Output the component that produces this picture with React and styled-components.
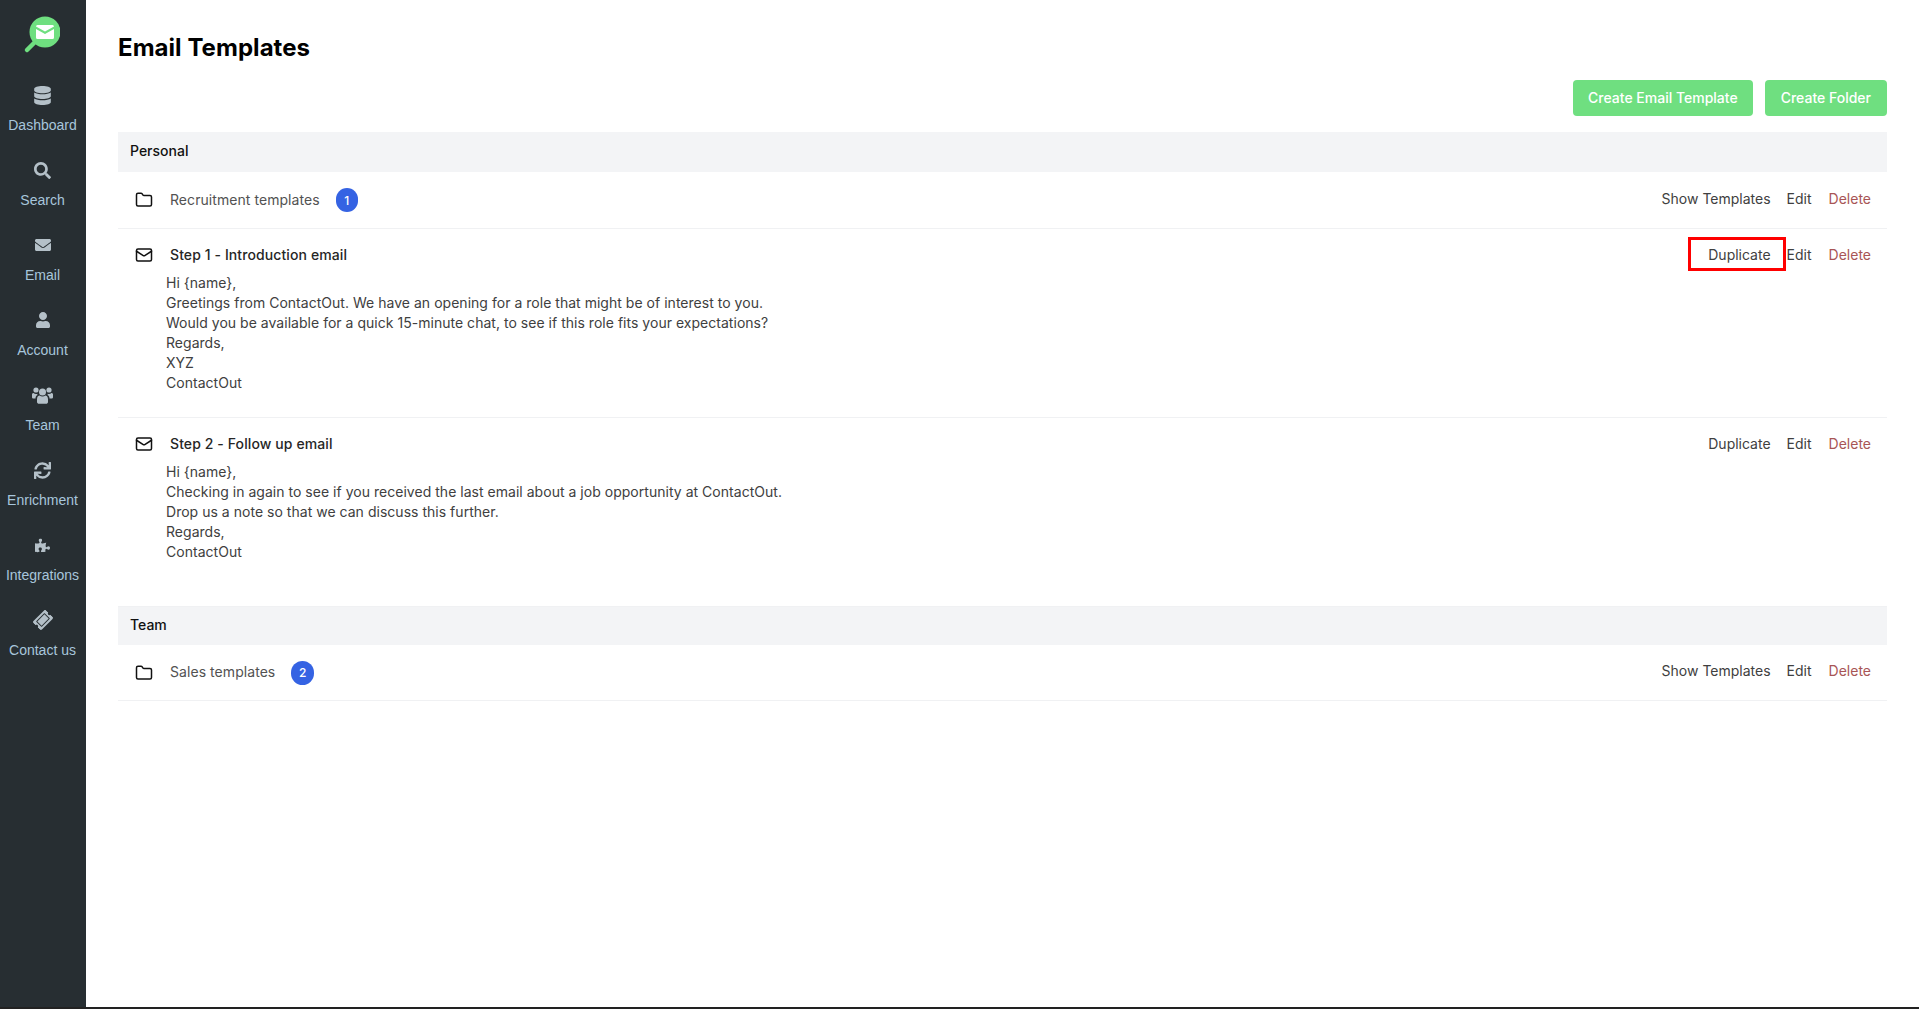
import React from "react";
import styled, { createGlobalStyle } from "styled-components";
import { FaDatabase, FaSearch, FaEnvelope, FaUser, FaSync, FaPuzzlePiece, FaTicketAlt } from "react-icons/fa";
import { Folder, Mail } from "lucide-react";

const Global = createGlobalStyle`
  html, body { margin: 0; padding: 0; height: 100%; background: #fff; }
  #root { height: 1009px; overflow: hidden; }
  * { box-sizing: border-box; }
`;
const Page = styled.div`
  display: flex; flex-direction: column; height: 1009px;
  font-family: Inter, "Liberation Sans", sans-serif; font-size: 14px; color: #404040;
`;
const Body = styled.div` display: flex; flex: 1; min-height: 0; `;
const BottomEdge = styled.div` height: 2px; background: #222; `;
const Sidebar = styled.nav`
  width: 86px; flex: none; background: #272e32; display: flex; flex-direction: column; align-items: center;
  padding-top: 16px; font-family: "Liberation Sans", Arial, sans-serif;
`;
const Logo = styled.svg` width: 38px; height: 38px; display: block; margin-bottom: 21px; margin-right: 4px; `;
const NavItem = styled.a`
  height: 75px; width: 86px; display: flex; flex-direction: column; align-items: center;
  color: #a7c6dc; font-size: 14px; line-height: 20px; padding: 10px 1px 0 0;
`;
const NavIcon = styled.span`
  height: 20px; margin-bottom: 10px; display: flex; align-items: center; justify-content: center;
  color: #b4c0c8; font-size: ${(p) => p.$size}px;
  svg { display: block; transform: rotate(${(p) => p.$rotate || 0}deg); }
`;
const Main = styled.main` flex: 1; padding: 0 32px; min-width: 0; `;
const Title = styled.h1`
  margin: 0; padding-top: 32px; height: 80px; font-size: 24px; line-height: 32px; font-weight: 700;
  letter-spacing: .05px; color: #000;
`;
const Toolbar = styled.div` display: flex; justify-content: flex-end; gap: 12px; height: 52px; align-items: flex-start; `;
const GreenButton = styled.button`
  height: 36px; padding: 0 ${(p) => p.$pad}px; border: 0; border-radius: 4px; background: #6fdf80; color: #fff;
  font: 500 14px/36px Inter, sans-serif;
`;
const SectionHead = styled.div`
  height: ${(p) => p.$h}px; background: #f3f4f6; padding: 0 0 3px 12px; display: flex; align-items: center;
  font-weight: 500; font-size: 14px; color: #111;
`;
const Row = styled.div`
  display: flow-root; border-bottom: 1px solid #f0f1f3; padding: 0 16px 0 17px; height: ${(p) => p.$h}px;
`;
const FolderLine = styled.div` display: flex; align-items: center; height: 100%; `;
const TemplateLine = styled.div` display: flex; align-items: center; height: 36px; margin-top: 8px; `;
const RowIcon = styled.span` width: 18px; height: 18px; margin-right: 17px; display: flex; color: #111; `;
const FolderName = styled.span` color: #525252; letter-spacing: .06px; padding-bottom: 2px; `;
const TemplateName = styled.span` font-weight: 500; color: #262626; letter-spacing: .1px; padding-bottom: 1px; `;
const Badge = styled.span`
  margin-left: 16px; width: ${(p) => p.$w}px; height: 24px; border-radius: 12px; background: #3563e3; color: #fff;
  font-size: 12px; font-weight: 500; display: flex; align-items: center; justify-content: center;
`;
const Actions = styled.div`
  margin-left: auto; display: flex; gap: 16px; margin-top: ${(p) => p.$nudge}px;
`;
const Action = styled.a`
  position: relative; color: ${(p) => (p.$danger ? "#a85555" : "#404040")};
  margin-left: ${(p) => (p.$danger ? "1px" : "0")};
  ${(p) => p.$boxed && `
    &::after { content: ""; position: absolute; left: -20px; right: -15px; top: -9px; bottom: -8px; border: 3px solid #f00; }
  `}
`;
const Message = styled.div` margin-left: 31px; line-height: 20px; color: #404040; letter-spacing: .025px; `;

const UsersIcon = () => (
  <svg width="21" height="19" viewBox="0 0 21 19" fill="currentColor">
    <circle cx="10.500" cy="6" r="3.500" />
    <circle cx="4" cy="4" r="2.600" />
    <circle cx="17" cy="4" r="2.600" />
    <path d="M5 13c0-2.500 1.500-3.500 2.700-3.500.7.600 1.700 1 2.800 1s2.100-.4 2.800-1c1.200 0 2.700 1 2.700 3.500v3c0 1.100-1 1.800-2 1.800H7c-1 0-2-.7-2-1.800Z" />
    <path d="M0 8.500C0 7.500.8 7 1.500 7c.7.600 1.600.9 2.500.9.500 0 .9-.1 1.300-.2-.1.500 0 1 .2 1.400-1.200.600-2 1.800-2 3.400H1.500C.7 12.500 0 12 0 11.200Z" />
    <path d="M21 8.500C21 7.500 20.200 7 19.500 7c-.7.600-1.600.9-2.500.9-.5 0-.9-.1-1.300-.2.100.5 0 1-.2 1.400 1.200.600 2 1.800 2 3.400h2c.8 0 1.500-.5 1.500-1.300Z" />
  </svg>
);

const nav = [
  [<FaDatabase />, "Dashboard", 19],
  [<FaSearch />, "Search", 17],
  [<FaEnvelope />, "Email", 16],
  [<FaUser />, "Account", 16],
  [<UsersIcon />, "Team", 19],
  [<FaSync />, "Enrichment", 17],
  [<FaPuzzlePiece />, "Integrations", 15],
  [<FaTicketAlt />, "Contact us", 18, -45],
];

const FolderRow = ({ name, count, w, h }) => (
  <Row $h={h}>
    <FolderLine>
      <RowIcon><Folder size={18} strokeWidth={2} /></RowIcon>
      <FolderName>{name}</FolderName>
      <Badge $w={w}>{count}</Badge>
      <Actions $nudge={-4}>
        <Action>Show Templates</Action><Action>Edit</Action><Action $danger>Delete</Action>
      </Actions>
    </FolderLine>
  </Row>
);

const TemplateRow = ({ name, lines, boxed }) => (
  <Row $h={189}>
    <TemplateLine>
      <RowIcon><Mail size={18} strokeWidth={2} /></RowIcon>
      <TemplateName>{name}</TemplateName>
      <Actions $nudge={-1}>
        <Action $boxed={boxed}>Duplicate</Action><Action>Edit</Action><Action $danger>Delete</Action>
      </Actions>
    </TemplateLine>
    <Message>{lines.map((l) => <div key={l}>{l}</div>)}</Message>
  </Row>
);

export default function App() {
  return (
    <Page>
      <Global />
      <Body>
        <Sidebar>
          <Logo viewBox="0 0 38 38">
            <path d="M5 34 L13 26" stroke="#6fdf80" strokeWidth="4.500" strokeLinecap="round" />
            <circle cx="23" cy="16" r="15.500" fill="#6fdf80" />
            <path d="M14 10.500a1.500 1.500 0 0 1 1.500-1.500h15a1.500 1.500 0 0 1 1.500 1.500L23 15.500Z" fill="#fff" />
            <path d="M14 13l9 5 9-5v8.500a1.500 1.500 0 0 1-1.500 1.500h-15a1.500 1.500 0 0 1-1.500-1.500Z" fill="#fff" />
          </Logo>
          {nav.map(([icon, label, size, rotate]) => (
            <NavItem key={label}>
              <NavIcon $size={size} $rotate={rotate}>{icon}</NavIcon>
              {label}
            </NavItem>
          ))}
        </Sidebar>
        <Main>
          <Title>Email Templates</Title>
          <Toolbar>
            <GreenButton $pad={15}>Create Email Template</GreenButton>
            <GreenButton $pad={16}>Create Folder</GreenButton>
          </Toolbar>
          <SectionHead $h={40}>Personal</SectionHead>
          <FolderRow name="Recruitment templates" count="1" w={22} h={57} />
          <TemplateRow
            boxed name="Step 1 - Introduction email"
            lines={[
              "Hi {name},",
              "Greetings from ContactOut. We have an opening for a role that might be of interest to you.",
              "Would you be available for a quick 15-minute chat, to see if this role fits your expectations?",
              "Regards,", "XYZ", "ContactOut",
            ]}
          />
          <TemplateRow
            name="Step 2 - Follow up email"
            lines={[
              "Hi {name},",
              "Checking in again to see if you received the last email about a job opportunity at ContactOut.",
              "Drop us a note so that we can discuss this further.",
              "Regards,", "ContactOut",
            ]}
          />
          <SectionHead $h={38}>Team</SectionHead>
          <FolderRow name="Sales templates" count="2" w={23} h={56} />
        </Main>
      </Body>
      <BottomEdge />
    </Page>
  );
}
